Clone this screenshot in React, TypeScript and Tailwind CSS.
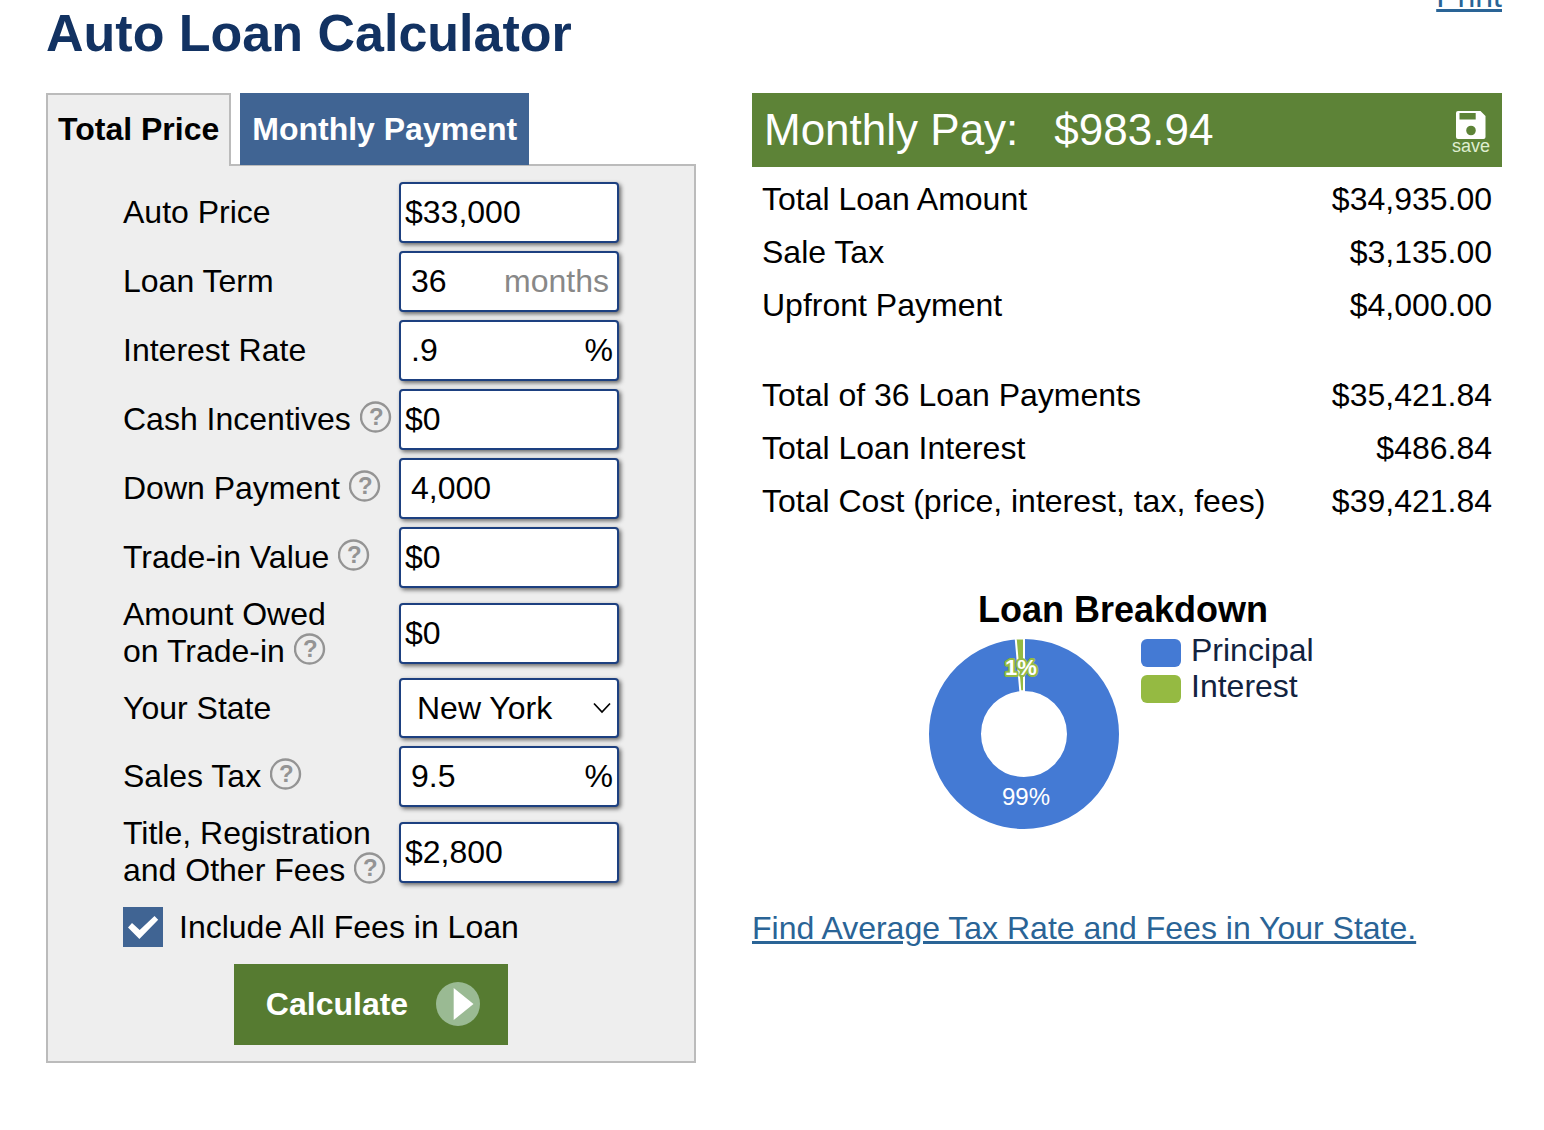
import { useState } from "react";

type Field = {
  id: string;
  label: string[];
  value: string;
  help?: boolean;
  suffix?: string;
  muted?: boolean;
  options?: string[];
};

const fields: Field[] = [
  { id: "price", label: ["Auto Price"], value: "$33,000" },
  { id: "term", label: ["Loan Term"], value: "36", suffix: "months", muted: true },
  { id: "rate", label: ["Interest Rate"], value: ".9", suffix: "%" },
  { id: "incentives", label: ["Cash Incentives"], value: "$0", help: true },
  { id: "down", label: ["Down Payment"], value: "4,000", help: true },
  { id: "trade", label: ["Trade-in Value"], value: "$0", help: true },
  { id: "owed", label: ["Amount Owed", "on Trade-in"], value: "$0", help: true },
  {
    id: "state",
    label: ["Your State"],
    value: "New York",
    options: ["California", "Florida", "New York", "Texas"],
  },
  { id: "tax", label: ["Sales Tax"], value: "9.5", suffix: "%", help: true },
  {
    id: "fees",
    label: ["Title, Registration", "and Other Fees"],
    value: "$2,800",
    help: true,
  },
];

const loanRows = [
  ["Total Loan Amount", "$34,935.00"],
  ["Sale Tax", "$3,135.00"],
  ["Upfront Payment", "$4,000.00"],
];

const totalRows = [
  ["Total of 36 Loan Payments", "$35,421.84"],
  ["Total Loan Interest", "$486.84"],
  ["Total Cost (price, interest, tax, fees)", "$39,421.84"],
];

function HelpButton() {
  return (
    <button type="button" aria-label="Help" className="inline-block align-[-3px]">
      <svg width="32" height="32" viewBox="0 0 32 32" className="block">
        <circle cx="15.5" cy="16" r="14.5" fill="none" stroke="#949494" strokeWidth="2.4" />
        <text
          x="16.3"
          y="24"
          textAnchor="middle"
          fill="#949494"
          className="text-[24px] font-bold"
        >
          ?
        </text>
      </svg>
    </button>
  );
}

function FieldRow({ field }: { field: Field }) {
  const [value, setValue] = useState(field.value);
  // plain numbers sit a little further in than amounts with a dollar sign
  const indent = value.startsWith("$") ? "pl-1" : "pl-[10px]";

  return (
    <>
      <div>
        <label htmlFor={field.id}>
          {field.label[0]}
          {field.label[1] && (
            <>
              <br />
              {field.label[1]}
            </>
          )}
        </label>
        {field.help && (
          <>
            {" "}
            <HelpButton />
          </>
        )}
      </div>

      {field.options ? (
        <div className="relative h-[60px] rounded border-2 border-[#1d4080] bg-white shadow-[2px_2px_4px_#666]">
          <select
            id={field.id}
            value={value}
            onChange={(e) => setValue(e.target.value)}
            className="size-full appearance-none bg-transparent pl-4 outline-none"
          >
            {field.options.map((name) => (
              <option key={name}>{name}</option>
            ))}
          </select>
          <svg
            viewBox="0 0 18 12"
            className="pointer-events-none absolute top-[22px] right-[6px] h-3 w-[18px]"
          >
            <path d="M1 1.5 9 10 17 1.5" fill="none" stroke="#000" strokeWidth="1.7" />
          </svg>
        </div>
      ) : (
        <div className="flex h-[61px] items-center rounded border-2 border-[#1d4080] bg-white shadow-[2px_2px_4px_#666]">
          <input
            id={field.id}
            type="text"
            value={value}
            onChange={(e) => setValue(e.target.value)}
            className={`h-full w-full min-w-0 flex-1 bg-transparent outline-none ${indent}`}
          />
          {field.suffix && (
            <span className={field.muted ? "pr-2 text-[#888]" : "pr-1"}>
              {field.suffix}
            </span>
          )}
        </div>
      )}
    </>
  );
}

function ResultRow({ name, amount }: { name: string; amount: string }) {
  return (
    <tr className="h-[53px]">
      <th scope="row" className="pl-[10px] text-left font-normal">
        {name}
      </th>
      <td className="pr-[10px] text-right">{amount}</td>
    </tr>
  );
}

function Donut() {
  return (
    <svg width="190" height="190" viewBox="0 0 190 190" className="shrink-0">
      <circle cx="95" cy="95" r="69" fill="none" stroke="#447ad4" strokeWidth="52" />
      {/* interest slice, 1.4% of the ring */}
      <path
        d="M95 -1 A96 96 0 0 0 86.7 -0.6 L91.3 52.2 A43 43 0 0 1 95 52 Z"
        fill="#95ba42"
        stroke="#fff"
        strokeWidth="2"
      />
      <text
        x="92"
        y="36"
        textAnchor="middle"
        fill="#fff"
        stroke="#95ba42"
        strokeWidth="4"
        strokeLinejoin="round"
        paintOrder="stroke"
        className="text-[22px] font-bold"
      >
        1%
      </text>
      <text x="97" y="166" textAnchor="middle" fill="#fff" className="text-[24px]">
        99%
      </text>
    </svg>
  );
}

export default function App() {
  const [includeFees, setIncludeFees] = useState(true);

  return (
    <div className="overflow-hidden bg-white pr-[42px] pb-16 pl-[46px] font-['Liberation_Sans',Arial,sans-serif] text-[32px] leading-[37px] text-black">
      {/* HEADER */}
      <header className="-mt-[22px] flex items-start justify-between pb-[30px]">
        <h1 className="pt-[25px] text-[52px] leading-[60px] font-bold text-[#123262]">
          Auto Loan Calculator
        </h1>
        <a
          href="#print"
          className="text-[#2a6496] underline decoration-[3px] underline-offset-2"
        >
          Print
        </a>
      </header>

      <main className="grid grid-cols-[13fr_15fr] items-start gap-14">
        {/* FORM */}
        <section>
          <div className="relative z-10 flex h-[71px] items-start gap-[9px] font-bold">
            <button
              type="button"
              className="h-[73px] border-2 border-b-0 border-[#bbb] bg-[#eee] px-[10px] pb-[3px]"
            >
              Total Price
            </button>
            <button type="button" className="h-[72px] bg-[#406493] px-3 text-white">
              Monthly Payment
            </button>
          </div>

          <form
            onSubmit={(e) => e.preventDefault()}
            className="flex flex-col items-center border-2 border-[#bbb] bg-[#eee] py-4"
          >
            <div className="grid grid-cols-[276px_220px] items-center gap-y-2">
              {fields.map((field) => (
                <FieldRow key={field.id} field={field} />
              ))}

              <label className="col-span-2 mt-[10px] flex items-center gap-4">
                <span className="relative size-10">
                  <input
                    type="checkbox"
                    checked={includeFees}
                    onChange={(e) => setIncludeFees(e.target.checked)}
                    className="block size-10 appearance-none bg-[#406493]"
                  />
                  {includeFees && (
                    <svg
                      viewBox="0 0 40 40"
                      className="pointer-events-none absolute inset-0 size-10"
                    >
                      <path d="M5 20.5 9 16 16.7 23 31.5 9 35.2 12.8 16.4 32Z" fill="#fff" />
                    </svg>
                  )}
                </span>
                Include All Fees in Loan
              </label>
            </div>

            <button
              type="submit"
              className="mt-[17px] flex h-[81px] items-center gap-7 bg-[#567b31] pr-7 pl-8 font-bold text-white"
            >
              Calculate
              <svg width="44" height="46" viewBox="0 0 44 46">
                <circle cx="22" cy="22" r="22" fill="#9aba93" />
                <path d="M17.7 6 37.5 22 17.7 38Z" fill="#fff" />
              </svg>
            </button>
          </form>
        </section>

        {/* RESULTS */}
        <section>
          <div className="flex h-[74px] items-center justify-between bg-[#5d8337] px-3 text-white">
            <h2 className="flex gap-9 text-[44px] leading-[50px]">
              <span>Monthly Pay:</span>
              <span>$983.94</span>
            </h2>
            <button
              type="button"
              className="flex flex-col items-center pt-[3px] text-[18px] leading-[14px] text-[#dfeed0]"
            >
              <svg width="30" height="28" viewBox="0 0 30 28">
                <path
                  fillRule="evenodd"
                  fill="#fff"
                  d="M2 0H24.5L29.5 5V26a2 2 0 0 1-2 2H2a2 2 0 0 1-2-2V2A2 2 0 0 1 2 0ZM3.5 2V8.5H19.7V2ZM15 14.7a4.8 4.8 0 1 0 0 9.6a4.8 4.8 0 1 0 0-9.6Z"
                />
              </svg>
              save
            </button>
          </div>

          <table className="mt-[6px] w-full">
            <tbody>
              {loanRows.map(([name, amount]) => (
                <ResultRow key={name} name={name} amount={amount} />
              ))}
            </tbody>
            <tbody>
              <tr className="h-[37px]">
                <td colSpan={2} />
              </tr>
              {totalRows.map(([name, amount]) => (
                <ResultRow key={name} name={name} amount={amount} />
              ))}
            </tbody>
          </table>

          <div className="mt-[61px] flex flex-col items-center pr-2">
            <h3 className="text-[36px] leading-[42px] font-bold">Loan Breakdown</h3>
            <div className="mt-2 flex w-[388px] gap-[22px]">
              <Donut />
              <ul className="-mt-2">
                <li className="flex h-9 items-center gap-[10px] text-[#12233f]">
                  <span className="mt-2 h-7 w-10 rounded-md bg-[#447ad4]" />
                  <span className="mt-[2px]">Principal</span>
                </li>
                <li className="flex h-9 items-center gap-[10px] text-[#12233f]">
                  <span className="mt-2 h-7 w-10 rounded-md bg-[#95ba42]" />
                  <span className="mt-[2px]">Interest</span>
                </li>
              </ul>
            </div>
          </div>

          <a
            href="#rates"
            className="mt-[81px] block text-[#2a6496] underline decoration-[3px] underline-offset-2"
          >
            Find Average Tax Rate and Fees in Your State.
          </a>
        </section>
      </main>
    </div>
  );
}
